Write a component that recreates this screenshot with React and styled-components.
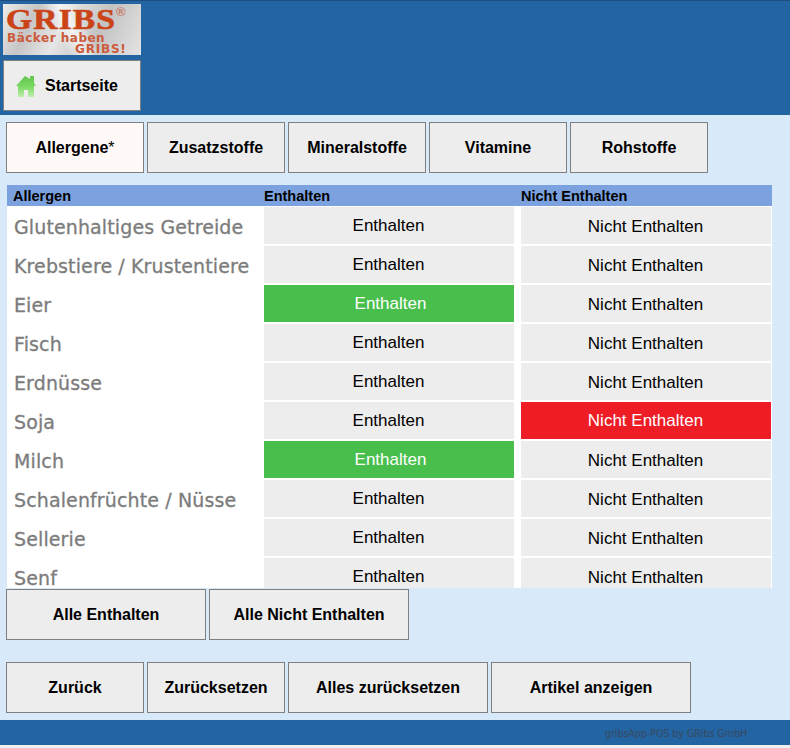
import styled, { createGlobalStyle } from "styled-components";

const GlobalStyle = createGlobalStyle`
    html, body {
        margin: 0;
        padding: 0;
        background: #f0f0f0;
    }
    body {
        font-family: "Liberation Sans", Arial, sans-serif;
    }
`;

const Page = styled.div`
    width: 790px;
    height: 748px;
    overflow: hidden;
    display: flex;
    flex-direction: column;
`;

const Header = styled.header`
    height: 115px;
    flex: none;
    box-sizing: border-box;
    background: #2364a2;
    border-top: 1px solid #1c4f80;
    padding: 3px 0 0 3px;
    display: flex;
    flex-direction: column;
    gap: 5px;
`;

const Logo = styled.div`
    width: 138px;
    height: 51px;
    flex: none;
    box-sizing: border-box;
    padding: 4px 0 0 3px;
    position: relative;
    display: flex;
    flex-direction: column;
    align-items: flex-start;
    line-height: 1;
    color: #cb4418;
    background:
        linear-gradient(62deg, transparent 40%, rgba(255, 255, 255, 0.7) 50%, transparent 60%),
        linear-gradient(115deg, #ececec 0%, #c6c6c6 22%, #e6e6e6 42%, #c2c2c2 68%, #e4e4e4 100%);
`;

const LogoName = styled.span`
    height: 22px;
    font-family: "Liberation Serif", serif;
    font-size: 30px;
    line-height: 22px;
    font-weight: 700;
    letter-spacing: 1px;
    -webkit-text-stroke: 0.6px #cb4418;
    transform: scaleX(1.12);
    transform-origin: left;
`;

const LogoMark = styled.span`
    position: absolute;
    left: 113px;
    top: 1px;
    font-size: 13px;
    font-weight: 700;
    color: #c77a66;
`;

const LogoSlogan = styled.span`
    height: 12px;
    margin: 2px 0 0 1px;
    font-family: "DejaVu Sans", sans-serif;
    font-size: 12px;
    line-height: 12px;
    font-weight: 700;
    letter-spacing: 0.5px;
    color: #cc5a3c;
`;

const LogoSloganEnd = styled(LogoSlogan)`
    margin: -1px 0 0 69px;
    letter-spacing: 0.8px;
`;

const Button = styled.button`
    width: ${props => props.$width || 138}px;
    height: 51px;
    flex: none;
    box-sizing: border-box;
    margin: 0;
    padding: 0;
    border: 1px solid #7f7f7f;
    background: ${props => (props.$active ? "#fff9f7" : "#ededed")};
    color: #000;
    font-family: "Liberation Sans", Arial, sans-serif;
    font-size: 16px;
    font-weight: 700;
    display: flex;
    align-items: center;
    justify-content: center;
`;

const HomeButton = styled(Button)`
    justify-content: flex-start;
    padding-left: 12px;
    gap: 9px;
`;

const Star = styled.span`
    font-weight: 400;
`;

const Content = styled.main`
    flex: 1;
    background: #d8e9fa;
    padding: 7px 0 0 6px;
    display: flex;
    flex-direction: column;
`;

const ButtonRow = styled.div`
    display: flex;
    gap: 3px;
`;

const BottomRow = styled(ButtonRow)`
    margin-top: 22px;
`;

const Table = styled.div`
    width: 765px;
    height: 403px;
    margin: 12px 0 1px 1px;
    overflow: hidden;
    flex: none;
    background: #fff;
`;

const HeadRow = styled.div`
    height: 21px;
    background: #7ba2de;
    display: grid;
    grid-template-columns: 257px 257px 1fr;
    align-items: center;
    font-size: 14.5px;
    font-weight: 700;
    color: #000;
`;

const HeadCell = styled.div`
    padding-left: ${props => props.$pad || 0}px;
`;

const Rows = styled.div`
    padding-top: 1px;
    display: flex;
    flex-direction: column;
    gap: 2px;
`;

const Row = styled.div`
    display: grid;
    grid-template-columns: 257px 250px 7px 250px;
    height: 37px;
`;

const Name = styled.div`
    padding: 2px 0 0 7px;
    font-family: "DejaVu Sans", sans-serif;
    font-size: 19px;
    letter-spacing: 0.12px;
    -webkit-text-stroke: 0.3px #7c7c7c;
    color: #7c7c7c;
    display: flex;
    align-items: center;
    white-space: nowrap;
`;

const Choice = styled.div`
    grid-column: ${props => props.$col};
    box-sizing: border-box;
    background: ${props => props.$bg || "#ededed"};
    color: ${props => (props.$bg ? "#fff" : "#000")};
    font-size: 17px;
    padding: ${props => props.$shift || "0"};
    display: flex;
    align-items: center;
    justify-content: center;
`;

const Footer = styled.footer`
    height: 25px;
    flex: none;
    margin-bottom: 3px;
    background: #2364a2;
    color: #374a60;
    font-family: "DejaVu Sans", sans-serif;
    font-size: 10.5px;
    font-stretch: condensed;
    display: flex;
    align-items: center;
    justify-content: flex-end;
    padding-right: 43px;
`;

function HomeIcon() {
    return (
        <svg width="20" height="22" viewBox="0 0 20 22">
            <defs>
                <linearGradient id="home" x1="0" y1="0" x2="0" y2="1">
                    <stop offset="0" stopColor="#5fc44c" />
                    <stop offset="0.55" stopColor="#7edb68" />
                    <stop offset="1" stopColor="#c2efb0" />
                </linearGradient>
            </defs>
            <path
                d="M9 1 L14 4 V1 H18 V8 L20 11 H18 V22 H12 V15 H8 V22 H2 V11 H0 Z"
                fill="url(#home)"
            />
        </svg>
    );
}

const allergens = [
    { name: "Glutenhaltiges Getreide" },
    { name: "Krebstiere / Krustentiere" },
    { name: "Eier", state: "yes" },
    { name: "Fisch" },
    { name: "Erdnüsse" },
    { name: "Soja", state: "no" },
    { name: "Milch", state: "yes" },
    { name: "Schalenfrüchte / Nüsse" },
    { name: "Sellerie" },
    { name: "Senf" },
];

const tabs = ["Zusatzstoffe", "Mineralstoffe", "Vitamine", "Rohstoffe"];

export default function App() {
    return (
        <Page>
            <GlobalStyle />
            <Header>
                <Logo>
                    <LogoName>GRIBS</LogoName>
                    <LogoMark>®</LogoMark>
                    <LogoSlogan>Bäcker haben</LogoSlogan>
                    <LogoSloganEnd>GRIBS!</LogoSloganEnd>
                </Logo>
                <HomeButton>
                    <HomeIcon />
                    Startseite
                </HomeButton>
            </Header>
            <Content>
                <ButtonRow>
                    <Button $active>
                        Allergene<Star>*</Star>
                    </Button>
                    {tabs.map(tab => (
                        <Button key={tab}>{tab}</Button>
                    ))}
                </ButtonRow>
                <Table>
                    <HeadRow>
                        <HeadCell $pad={6}>Allergen</HeadCell>
                        <HeadCell>Enthalten</HeadCell>
                        <HeadCell>Nicht Enthalten</HeadCell>
                    </HeadRow>
                    <Rows>
                        {allergens.map(item => (
                            <Row key={item.name}>
                                <Name>{item.name}</Name>
                                {item.state === "yes" ? (
                                    <Choice $col={2} $bg="#48be4c" $shift="0 0 0 3px">
                                        Enthalten
                                    </Choice>
                                ) : (
                                    <Choice $col={2} $shift="0 1px 0 0">
                                        Enthalten
                                    </Choice>
                                )}
                                {item.state === "no" ? (
                                    <Choice $col={4} $bg="#ee1c25" $shift="0 1px 0 0">
                                        Nicht Enthalten
                                    </Choice>
                                ) : (
                                    <Choice $col={4} $shift="2px 1px 0 0">
                                        Nicht Enthalten
                                    </Choice>
                                )}
                            </Row>
                        ))}
                    </Rows>
                </Table>
                <ButtonRow>
                    <Button $width={200}>Alle Enthalten</Button>
                    <Button $width={200}>Alle Nicht Enthalten</Button>
                </ButtonRow>
                <BottomRow>
                    <Button>Zurück</Button>
                    <Button>Zurücksetzen</Button>
                    <Button $width={200}>Alles zurücksetzen</Button>
                    <Button $width={200}>Artikel anzeigen</Button>
                </BottomRow>
            </Content>
            <Footer>gribsApp-POS by GRibs GmbH</Footer>
        </Page>
    );
}
